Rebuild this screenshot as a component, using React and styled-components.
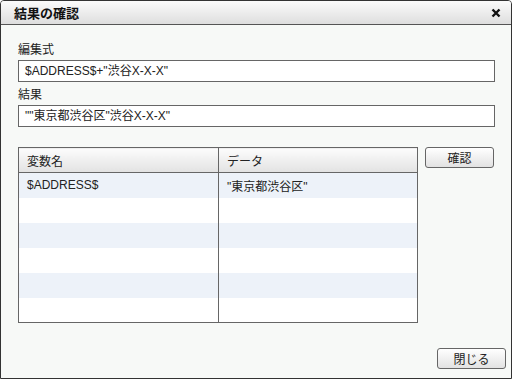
import React from "react";
import styled, { createGlobalStyle } from "styled-components";

const GlobalStyle = createGlobalStyle`
  html, body {
    margin: 0;
    padding: 0;
    background: #ffffff;
  }
  body {
    font-family: "Liberation Sans", "Noto Sans CJK JP", sans-serif;
    font-size: 12px;
    color: #222;
  }
`;

const BORDER = "#666666";

const Dialog = styled.div`
  width: 512px;
  height: 379px;
  box-sizing: border-box;
  border: 1px solid #333;
  border-radius: 4px 4px 0 0;
  background: #f7f9f7;
  display: flex;
  flex-direction: column;
  overflow: hidden;
`;

const TitleBar = styled.div`
  height: 23px;
  flex: none;
  display: flex;
  align-items: center;
  justify-content: space-between;
  padding: 0 10px 0 13px;
  background: linear-gradient(#fbfbfb, #dedede);
  border-bottom: 1px solid #555;
`;

const Title = styled.div`
  font-size: 13px;
  font-weight: bold;
  color: #111;
`;

const CloseX = styled.button`
  border: 0;
  background: none;
  padding: 0;
  width: 10px;
  height: 10px;
  display: flex;
  cursor: pointer;
`;

const Body = styled.div`
  flex: 1;
  display: flex;
  flex-direction: column;
  padding: 17px 16px 9px 17px;
`;

const Label = styled.div`
  height: 16px;
  line-height: 16px;
  margin-top: ${(p) => p.$top || 0}px;
  margin-bottom: 2px;
  color: #222;
`;

const TextBox = styled.div`
  height: 22px;
  box-sizing: border-box;
  border: 1px solid ${BORDER};
  background: #fff;
  padding: 0 6px;
  line-height: 20px;
  white-space: nowrap;
`;

const GridArea = styled.div`
  margin-top: 20px;
  display: flex;
  align-items: flex-start;
  gap: 7px;
`;

const Table = styled.table`
  width: 400px;
  border-collapse: collapse;
  border: 1px solid ${BORDER};
  table-layout: fixed;
`;

const Th = styled.th`
  height: 24px;
  padding: 0 0 0 8px;
  text-align: left;
  font-weight: normal;
  background: linear-gradient(#fcfcfc, #e2e2e2);
  border-bottom: 1px solid ${BORDER};
  border-right: 1px solid ${BORDER};
  &:last-child {
    border-right: 0;
  }
`;

const Td = styled.td`
  height: 25px;
  padding: 0 0 0 8px;
  box-sizing: border-box;
  border-right: 1px solid ${BORDER};
  background: ${(p) => (p.$alt ? "#edf2f9" : "#ffffff")};
  white-space: nowrap;
  &:last-child {
    border-right: 0;
  }
`;

const Button = styled.button`
  width: ${(p) => p.$w}px;
  height: 21px;
  box-sizing: border-box;
  border: 1px solid ${BORDER};
  border-radius: 3px;
  background: linear-gradient(#ffffff, #e2e2e2);
  font-family: "Liberation Sans", "Noto Sans CJK JP", sans-serif;
  font-size: 12px;
  color: #222;
  padding: 0;
  cursor: pointer;
`;

const Footer = styled.div`
  margin-top: auto;
  margin-right: -11px;
  display: flex;
  justify-content: flex-end;
`;

const rows = [
  { name: "$ADDRESS$", data: "\"東京都渋谷区\"" },
  { name: "", data: "" },
  { name: "", data: "" },
  { name: "", data: "" },
  { name: "", data: "" },
  { name: "", data: "" },
];

export default function App() {
  return (
    <>
      <GlobalStyle />
      <Dialog>
        <TitleBar>
          <Title>結果の確認</Title>
          <CloseX aria-label="close">
            <svg width="10" height="10" viewBox="0 0 10 10">
              <path d="M1.5 1.5 L8.5 8.5 M8.5 1.5 L1.5 8.5" stroke="#111" strokeWidth="2.4" />
            </svg>
          </CloseX>
        </TitleBar>
        <Body>
          <Label>編集式</Label>
          <TextBox>$ADDRESS$+"渋谷X-X-X"</TextBox>
          <Label $top={5}>結果</Label>
          <TextBox>""東京都渋谷区"渋谷X-X-X"</TextBox>
          <GridArea>
            <Table>
              <colgroup>
                <col style={{ width: 200 }} />
                <col />
              </colgroup>
              <thead>
                <tr>
                  <Th>変数名</Th>
                  <Th>データ</Th>
                </tr>
              </thead>
              <tbody>
                {rows.map((r, i) => (
                  <tr key={i}>
                    <Td $alt={i % 2 === 0}>{r.name}</Td>
                    <Td $alt={i % 2 === 0}>{r.data}</Td>
                  </tr>
                ))}
              </tbody>
            </Table>
            <Button $w={69}>確認</Button>
          </GridArea>
          <Footer>
            <Button $w={69}>閉じる</Button>
          </Footer>
        </Body>
      </Dialog>
    </>
  );
}
